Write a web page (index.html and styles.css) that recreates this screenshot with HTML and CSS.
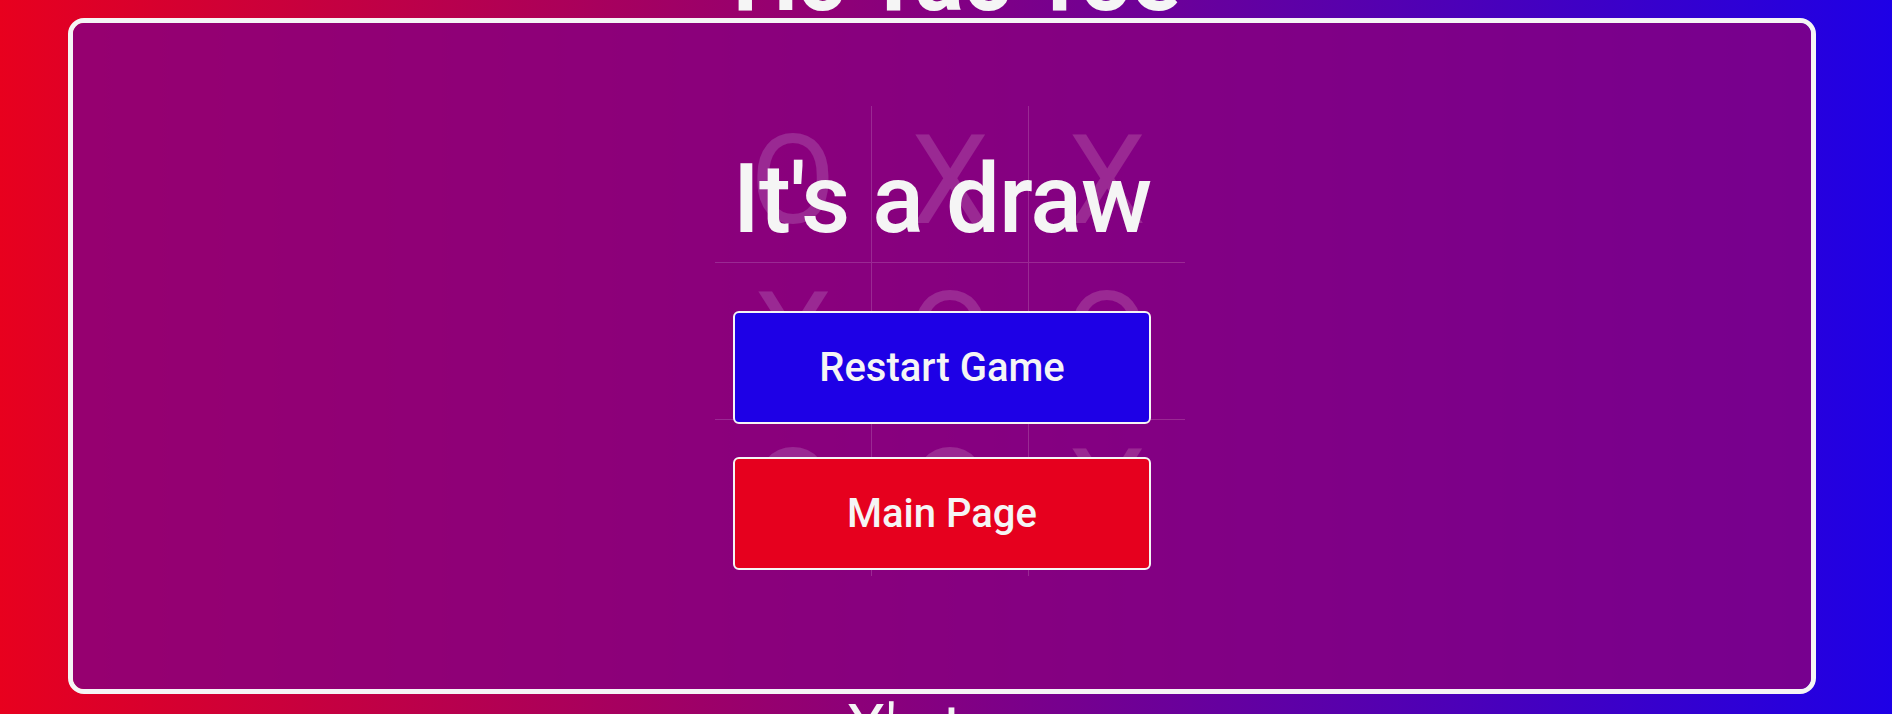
FILE: index.html
```html
<!DOCTYPE html>
<html lang="en">
<head>
<meta charset="utf-8">
<title>Tic Tac Toe</title>
<link rel="stylesheet" href="styles.css">
</head>
<body>
<main class="page">
  <h1 class="title">Tic Tac Toe</h1>
  <section class="frame">
    <div class="board">
      <div class="cell">O</div>
      <div class="cell">X</div>
      <div class="cell">X</div>
      <div class="cell">X</div>
      <div class="cell">O</div>
      <div class="cell">O</div>
      <div class="cell">O</div>
      <div class="cell">O</div>
      <div class="cell">X</div>
    </div>
    <div class="overlay">
      <h2 class="result">It's a draw</h2>
      <button class="btn btn-restart">Restart Game</button>
      <button class="btn btn-main">Main Page</button>
    </div>
  </section>
  <p class="turn">X's turn</p>
</main>
</body>
</html>
```
FILE: styles.css
```css
html, body {
  margin: 0;
  height: 100%;
}
body {
  overflow: hidden;
  font-family: Roboto, "Liberation Sans", sans-serif;
  color: #f5f5f5;
  background: linear-gradient(to right, #e8001e, #1e00e6);
}
.page {
  display: flex;
  flex-direction: column;
  align-items: stretch;
  padding: 0 76px 0 68px;
}
.title {
  margin: -65px 0 -5px;
  padding-left: 14px;
  font-size: 91px;
  line-height: 88px;
  font-weight: 700;
  text-align: center;
}
.frame {
  position: relative;
  box-sizing: border-box;
  height: 676px;
  border: 5px solid #f5f5f5;
  border-radius: 16px;
  display: flex;
  justify-content: center;
  align-items: flex-start;
  padding-top: 83px;
}
.board {
  margin-left: 16px;
  display: grid;
  grid-template-columns: 157px 157px 156px;
  grid-template-rows: 157px 157px 156px;
}
.cell {
  box-sizing: border-box;
  display: flex;
  align-items: center;
  justify-content: center;
  padding-bottom: 8px;
  font-size: 124px;
  font-weight: 400;
  color: #f5f5f5;
  border-right: 1px solid #f5f5f5;
  border-bottom: 1px solid #f5f5f5;
}
.cell:nth-child(3n) {
  border-right: none;
}
.cell:nth-child(n+7) {
  border-bottom: none;
}
.overlay {
  position: absolute;
  inset: 0;
  border-radius: 11px;
  background: rgba(135, 0, 127, 0.834);
  display: flex;
  flex-direction: column;
  align-items: center;
  justify-content: center;
}
.result {
  margin: 0 0 56px;
  font-size: 96px;
  font-weight: 500;
  letter-spacing: -1px;
  line-height: normal;
}
.btn {
  box-sizing: border-box;
  width: 418px;
  height: 113px;
  border: 2px solid #f5f5f5;
  border-radius: 6px;
  font-family: Roboto, "Liberation Sans", sans-serif;
  font-size: 40px;
  font-weight: 500;
  color: #f5f5f5;
  cursor: pointer;
}
.btn-restart {
  background: #1e00e6;
}
.btn-main {
  margin-top: 33px;
  background: #e6001e;
}
.turn {
  margin: -3px 0 0;
  padding-left: 16px;
  font-size: 63px;
  line-height: normal;
  text-align: center;
}
```
